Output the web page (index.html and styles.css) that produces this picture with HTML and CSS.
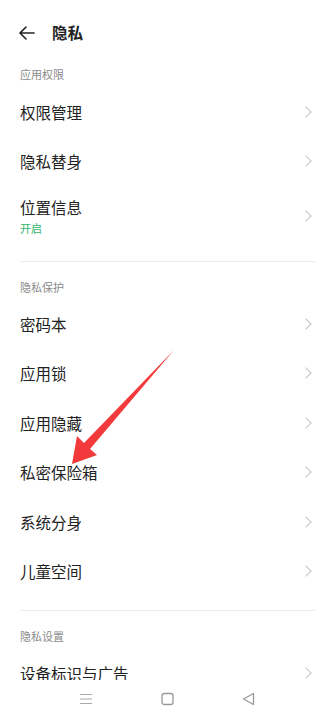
FILE: index.html
```html
<!DOCTYPE html>
<html lang="zh">
<head>
<meta charset="utf-8">
<link rel="stylesheet" href="styles.css">
</head>
<body>
<div class="page">
  <header class="topbar">
    <svg class="back" width="16" height="14" viewBox="0 0 16 14"><path d="M15 7H1.5M7 1L1 7l6 6" fill="none" stroke="#222" stroke-width="1.6" stroke-linecap="round" stroke-linejoin="round"/></svg>
    <h1 class="title">隐私</h1>
  </header>

  <div class="sec-title first">应用权限</div>
  <div class="row compact"><span class="label">权限管理</span><span class="chev"></span></div>
  <div class="row compact"><span class="label">隐私替身</span><span class="chev"></span></div>
  <div class="row row-tall">
    <div class="texts"><span class="label">位置信息</span><span class="sub">开启</span></div>
    <span class="chev"></span>
  </div>
  <div class="divider"></div>

  <div class="sec-title">隐私保护</div>
  <div class="row"><span class="label">密码本</span><span class="chev"></span></div>
  <div class="row"><span class="label">应用锁</span><span class="chev"></span></div>
  <div class="row"><span class="label">应用隐藏</span><span class="chev"></span></div>
  <div class="row"><span class="label">私密保险箱</span><span class="chev"></span></div>
  <div class="row"><span class="label">系统分身</span><span class="chev"></span></div>
  <div class="row"><span class="label">儿童空间</span><span class="chev"></span></div>
  <div class="divider"></div>

  <div class="sec-title">隐私设置</div>
  <div class="row"><span class="label">设备标识与广告</span><span class="chev"></span></div>

  <svg class="arrow" width="333" height="719" viewBox="0 0 333 719">
    <polygon points="174,350 90,449 97,455 72,464 77,436 84,443" fill="#f23a3c"/>
  </svg>

  <nav class="navbar">
    <svg width="14" height="12" viewBox="0 0 14 12"><path d="M1 1.5h12M1 6h12M1 10.5h12" stroke="#aaa" stroke-width="1.2" fill="none"/></svg>
    <svg width="13" height="14" viewBox="0 0 13 14"><rect x="1" y="1.5" width="11" height="11" rx="2.2" fill="none" stroke="#999" stroke-width="1.3"/></svg>
    <svg width="13" height="14" viewBox="0 0 13 14"><path d="M11.5 1.5v11L1.5 7z" fill="none" stroke="#999" stroke-width="1.3" stroke-linejoin="round"/></svg>
  </nav>
</div>
</body>
</html>
```

FILE: styles.css
```css
* { box-sizing: border-box; margin: 0; padding: 0; }
html, body { width: 333px; height: 719px; overflow: hidden; background: #fff; }
body { font-family: "Noto Sans CJK SC", "Noto Sans", sans-serif; color: #222; }
.page { position: relative; width: 333px; height: 719px; overflow: hidden; }

.topbar { height: 48.5px; display: flex; align-items: center; padding: 20.5px 0 6px 19px; gap: 17px; }
.back { display: block; margin-top: 3px; }
.title { font-size: 15.5px; font-weight: 700; line-height: 22px; color: #222; }

.sec-title { height: 37.3px; padding: 17px 0 0 20px; line-height: 16px; font-size: 11px; color: #8a8a8a; }
.sec-title.first { height: 39.3px; }

.row { height: 49.4px; display: flex; align-items: center; justify-content: space-between; padding: 0 20px; }
.row.compact { height: 48.5px; }
.row-tall { height: 63.4px; }
.label { font-size: 15.5px; line-height: 22px; color: #222; }
.texts { display: flex; flex-direction: column; gap: 2px; }
.sub { font-size: 11px; line-height: 16px; color: #2fb56b; }

.chev { width: 8px; height: 8px; border-top: 1.3px solid #c4c4c4; border-right: 1.3px solid #c4c4c4; transform: rotate(45deg); margin-right: 3px; }

.divider { height: 1px; background: #ececec; margin: 14.3px 18px 0 20px; }
.row-tall + .divider { margin-top: 12.8px; }

.arrow { position: absolute; left: 0; top: 0; pointer-events: none; }

.navbar { position: absolute; left: 0; right: 0; bottom: 0; height: 39px; background: #fff; display: flex; align-items: center; justify-content: center; gap: 68px; padding-bottom: 2px; }
.navbar svg { display: block; }
```
